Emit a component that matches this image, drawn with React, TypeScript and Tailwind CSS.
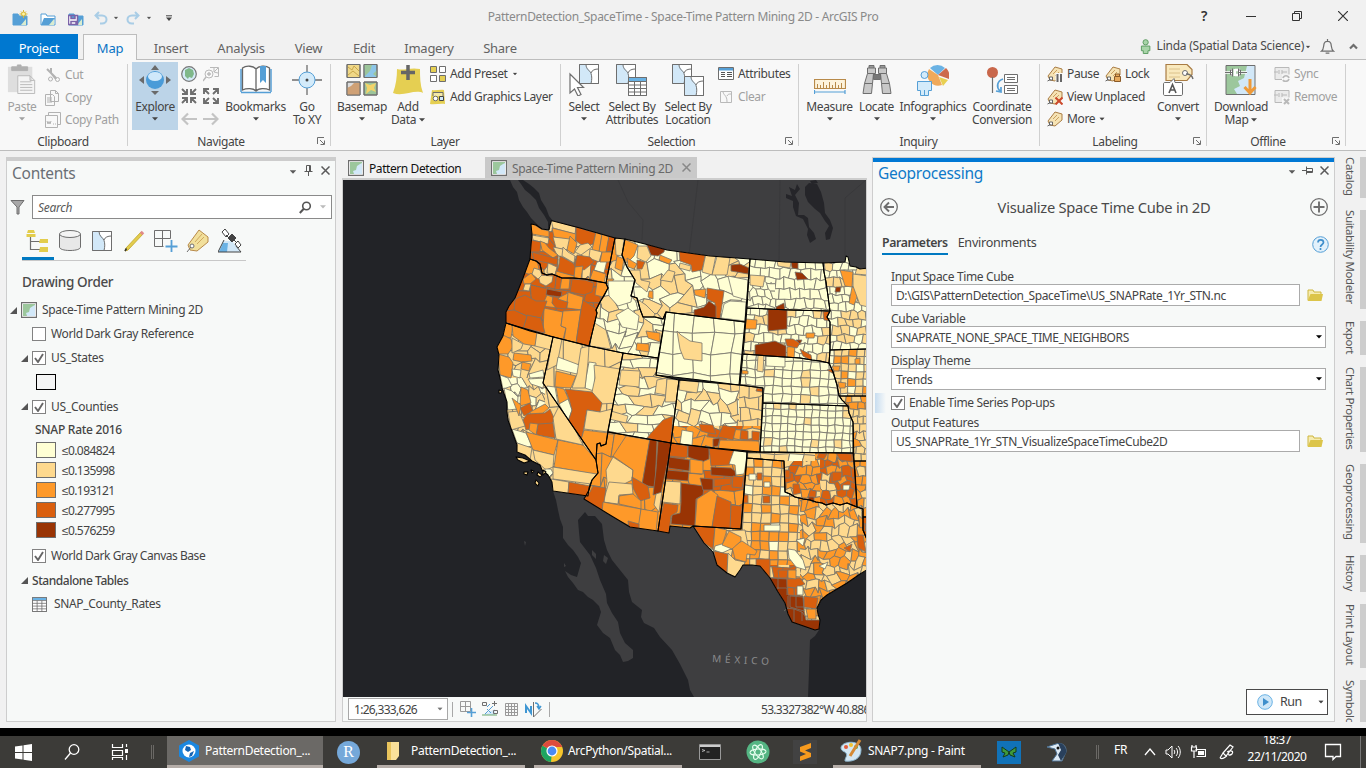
import React from "react";

type Kids = { children?: React.ReactNode };

/* ---------- generic helpers ---------- */

function Ico({ s = 32, v = 32, children, cls = "" }: Kids & { s?: number; v?: number; cls?: string }) {
  return (
    <svg width={s} height={s} viewBox={`0 0 ${v} ${v}`} className={`shrink-0 ${cls}`} fill="none" stroke="#6e6e6e" strokeWidth="1">
      {children}
    </svg>
  );
}

function Caret({ cls = "" }: { cls?: string }) {
  return (
    <svg width="6" height="4" viewBox="0 0 6 4" className={`shrink-0 ${cls}`}>
      <path d="M0 .3h6L3 3.6z" fill="currentColor" />
    </svg>
  );
}

function Big({ w, icon, a, b, caret, inline, cls = "" }: { w: string; icon: React.ReactNode; a: string; b?: string; caret?: boolean; inline?: boolean; cls?: string }) {
  return (
    <div className={`flex shrink-0 flex-col items-center pt-[3px] leading-[13px] whitespace-nowrap ${w} ${cls}`}>
      <div className="flex h-[37px] items-start pt-px">{icon}</div>
      <div>{a}</div>
      {b && (
        <div className="flex items-center gap-[3px]">
          {b}
          {inline && <Caret cls="mt-px" />}
        </div>
      )}
      {caret && <Caret cls="mt-[4px]" />}
    </div>
  );
}

function Row({ icon, children, cls = "" }: Kids & { icon: React.ReactNode; cls?: string }) {
  return (
    <div className={`flex h-[22.5px] items-center gap-1 whitespace-nowrap ${cls}`}>
      {icon}
      {children}
    </div>
  );
}

function Launcher() {
  return (
    <Ico s={8} v={8} cls="absolute right-[6px] bottom-[5px]">
      <path d="M.5 7V.5H7M3 3l4 4M7.5 3.500v4h-4" />
    </Ico>
  );
}

function Group({ w, label, launcher, children }: Kids & { w: string; label: string; launcher?: boolean }) {
  return (
    <div className={`relative flex shrink-0 flex-col ${w}`}>
      <div className="flex h-[72px]">{children}</div>
      <div className={`pt-[2px] text-center text-[12px] leading-4 text-[#444] ${launcher ? "pr-[17px]" : "pr-[2px]"}`}>{label}</div>
      {launcher && <Launcher />}
      <div className="absolute top-1 right-0 h-[82px] w-px bg-[#d0d0d0]" />
    </div>
  );
}

/* ---------- ribbon icons ---------- */

const FolderMap = ({ kind }: { kind: number }) => (
  <Ico s={16} v={16}>
    <path d="M1 15V4h5l1 2h8v9z" fill={kind === 1 ? "#fff" : "#559fd6"} stroke="#559fd6" />
    <path d="M1 15l3-7h11l-3 7z" fill="#559fd6" stroke="none" />
    <path d="M9 15l5-6v6z" fill="#d9eccf" stroke="none" />
    {kind === 0 && <path d="M11.500 0v8M7.500 4h8M9 1.500l5 5M14 1.500l-5 5" stroke="#d9b93c" />}
    {kind === 0 && <circle cx="11.500" cy="4" r="2" fill="#fff3a0" stroke="#d9b93c" />}
    {kind === 2 && <path d="M.5 5.500h9v9h-9zM3 5.500v3h4v-3M3 14.500v-3h5v3" fill="#fff" stroke="#7b62a8" strokeWidth="1.500" />}
  </Ico>
);

const Paste = (
  <Ico s={30}>
    <path d="M1 3h26v27H1z" fill="#dedede" stroke="none" />
    <path d="M5 3h17v4H5zM11 3V1h4v2" fill="#b0b0b0" stroke="#b0b0b0" />
    <path d="M11.500 12.500h13l5 5v14h-18zM24.500 12.500v5h5M14 19h12M14 22h13M14 25h13M14 28h13" fill="#f4f4f4" stroke="#b8b8b8" />
  </Ico>
);
const Cut = (
  <Ico s={16} v={16} cls="opacity-50">
    <path d="M2 2l9 9M6 1v5l5 6" strokeWidth="2" />
    <circle cx="12.500" cy="12.500" r="2" />
    <circle cx="5.500" cy="12" r="2" />
  </Ico>
);
const CopyI = (
  <Ico s={16} v={16} cls="opacity-50">
    <path d="M5.500.5h5l3 3v8h-8zM.5 4.500h7l2 2v9h-9zM2 8h5M2 10h5M2 12h5M10.500.5v3h3" fill="#f8f8f8" />
  </Ico>
);
const CopyPath = (
  <Ico s={16} v={16} cls="opacity-50">
    <path d="M3.500 3V.5h12v12H13M.5 3.500h12v12H.500z" fill="#f8f8f8" />
    <path d="M2 9l1 3 1-2.500L5 12l1-3M8 12h1M10 12h1" />
  </Ico>
);
const Explore = (
  <Ico>
    <path d="M16 1l4 5h-8zM16 31l4-4h-8zM0 16l5-4v8zM32 16l-5-4v8z" fill="#6a6a6a" stroke="none" />
    <circle cx="16" cy="16" r="9" fill="#4a9bd8" stroke="none" />
    <ellipse cx="16" cy="12.500" rx="7" ry="4.500" fill="#cfe8fa" stroke="none" />
  </Ico>
);
const Globe = (
  <Ico s={16} v={16}>
    <circle cx="8" cy="8" r="7.300" fill="#d5ebf8" stroke="#777" strokeWidth="1.200" />
    <path d="M4 4l4-2 4 2 1 4-2 4-3-1-1 2-3-3z" fill="#7fb88a" stroke="none" />
  </Ico>
);
const ZoomSel = (
  <Ico s={16} v={16} cls="opacity-45">
    <path d="M7 1.500h8.500v9h-4M15 2l-4 4V2M11 6l4 1" />
    <circle cx="6" cy="8" r="4" />
    <path d="M3 11l-3 4M4 8h4M6 6v4" strokeWidth="1.400" />
  </Ico>
);
const Arrows = ({ out }: { out?: boolean }) => (
  <Ico s={16} v={16}>
    {out ? (
      <path d="M1 6V1h5M1 1l5 5M10 1h5v5M15 1l-5 5M1 10v5h5M1 15l5-5M15 10v5h-5M15 15l-5-5" strokeWidth="1.900" />
    ) : (
      <path d="M6 1v5H1M1 1l5 5M10 1v5h5M15 1l-5 5M6 15v-5H1M1 15l5-5M10 15v-5h5M15 15l-5-5" strokeWidth="1.900" />
    )}
  </Ico>
);
const Arrow = ({ right }: { right?: boolean }) => (
  <Ico s={16} v={16}>
    <path d={right ? "M0 8h14M9 2.500L14.500 8 9 13.500" : "M16 8H2M7 2.500L1.500 8 7 13.500"} stroke="#c4c4c4" strokeWidth="2.200" />
  </Ico>
);
const Book = (
  <Ico>
    <path d="M1 28V5M31 28V5" stroke="#559fd6" strokeWidth="1.500" />
    <path d="M1 28.500h30" stroke="#559fd6" strokeWidth="1.500" />
    <path d="M2.500 26V4c4-3 11-2 13.500 1 2.500-3 9.500-4 13.500-1v22c-4-2-11-2-13.500 1-2.500-3-9.500-3-13.500-1zM16 5v22" fill="#fff" stroke="#666" strokeWidth="1.300" />
    <path d="M20 2h6v17l-3-3-3 3z" fill="#559fd6" stroke="none" />
  </Ico>
);
const GoTo = (
  <Ico>
    <path d="M16 1v8M16 24v7M1 16h7M24 16h7" strokeWidth="1.300" />
    <circle cx="16" cy="16" r="8" fill="#d4ebfa" stroke="#559fd6" />
    <circle cx="16" cy="16" r="1.500" fill="#444" stroke="none" />
  </Ico>
);
const Basemap = (
  <Ico>
    <path d="M1 .5h13v13H1z" fill="#f0d888" />
    <path d="M2 3l4 3 2-4 5 5M2 11l5-4 6 5" stroke="#c9a84c" />
    <path d="M18 .5h13v13H18z" fill="#8dc6e8" />
    <path d="M18 1h8l-2 6-5 5zM31 6l-4 4 4 3z" fill="#9cc59a" stroke="none" />
    <path d="M1 18h13v13H1z" fill="#dcdcdc" />
    <path d="M1 24l4-2 3-3h6v12H1z" fill="#cfa176" stroke="none" />
    <path d="M18 18h13v13H18z" fill="#9cc59a" />
    <path d="M19 19l5 2 6-2-2 5 2 4-5-2-5 4 1-6z" fill="#f2d36a" stroke="none" />
    <path d="M1 .5h13v13H1zM18 .5h13v13H18zM1 18h13v13H1zM18 18h13v13H18z" />
  </Ico>
);
const AddData = (
  <Ico>
    <path d="M5 5c7 2 13-2 23 0 0 8 0 16 3 24-8-4-20 4-30 0C4 21 5 13 5 5z" fill="#e5cf52" stroke="none" />
    <path d="M16 1v15M9 8.500h14" stroke="#666" strokeWidth="3.500" />
  </Ico>
);
const Preset = (
  <Ico s={16} v={16}>
    <path d="M.5.5h6v6h-6zM9.500 9.500h6v6h-6z" fill="#e5cf52" />
    <path d="M9.500.5h6v6h-6zM.500 9.500h6v6h-6z" fill="#fff" />
  </Ico>
);
const Graphics = (
  <Ico s={16} v={16}>
    <path d="M2 1c4 1 8-1 12 0l1 14c-5-1-10 1-15 0z" fill="#e5cf52" stroke="none" />
    <path d="M3 7V3.500h10V7" fill="#f4e9a8" />
    <circle cx="5.500" cy="9.500" r="2.300" fill="#fff" />
    <path d="M9.500 7.500h4v4h-4z" fill="#cfe8fa" stroke="#444" />
  </Ico>
);
const mapTile = (x: number, y: number) => (
  <g transform={`translate(${x} ${y})`}>
    <path d="M.5.5h19v19H.500z" fill="#fff" />
    <path d="M.5.5h6c2 5 6 6 6 10v9H.500z" fill="#d2e8f8" stroke="none" />
    <path d="M.5.5h19v19H.500zM7 .5c0 5 4 6 5 9s1 6 0 10M12 9c1-3 4-4 7.500-4" />
  </g>
);
const SelectI = (
  <Ico>
    {mapTile(11, 0)}
    <path d="M2 10v19l4.500-4 3.500 7 3-1.500-3.500-7h6z" fill="#fff" strokeWidth="1.200" />
  </Ico>
);
const tableIcon = (x: number, y: number) => (
  <g transform={`translate(${x} ${y})`}>
    <path d="M.5.5h18v18H.500z" fill="#fff" />
    <path d="M1 1h17v3H1z" fill="#6ab2e4" stroke="none" />
    <path d="M.5.5h18v18H.500zM.500 4.500h18M.500 8h18M.500 11.500h18M.500 15h18M6.500 4.500v14M12.500 4.500v14" />
  </g>
);
const SelAttr = (
  <Ico>
    {mapTile(0, 0)}
    {tableIcon(12, 13)}
  </Ico>
);
const SelLoc = (
  <Ico>
    {mapTile(0, 0)}
    {mapTile(12, 12)}
  </Ico>
);
const Attributes = (
  <Ico s={16} v={16}>
    <path d="M.5 1.500h15v12H.500z" fill="#fff" />
    <path d="M1 2h14v2.500H1z" fill="#559fd6" stroke="none" />
    <path d="M3 6.500h4M3 8.500h4M3 10.500h4M9 6.500h5M9 8.500h5M9 10.500h5" stroke="#555" />
  </Ico>
);
const ClearI = (
  <Ico s={16} v={16} cls="opacity-45">
    <path d="M2.500 2.500h11v11h-11zM5 3c1 4 4 3 4 10M9 7c1-2 2-2 4-2" />
  </Ico>
);
const Measure = (
  <Ico>
    <path d="M.5 15.500h31v9H.500z" fill="#fdf3dc" stroke="#b88a4a" strokeWidth="1.200" />
    <path d="M3.500 24v-4M6.500 24v-3M9.500 24v-6M12.500 24v-3M15.500 24v-6M18.500 24v-3M21.500 24v-6M24.500 24v-3M27.500 24v-5" stroke="#b88a4a" />
    <path d="M.5 26v4M31 26v4M1 28h30" stroke="#559fd6" strokeWidth="1.200" />
  </Ico>
);
const Locate = (
  <Ico>
    <path d="M8 4V1.500h5V4M19 4V1.500h5V4" fill="#999" />
    <path d="M6.500 4h8v5.500h-8zM17.500 4h8v5.500h-8z" fill="#c8c8c8" />
    <path d="M6.500 9.500h6l-1 10h-8zM19.500 9.500h6l3 10h-8z" fill="#c8c8c8" />
    <path d="M3.500 19.500h8l-1 10H2zM20.500 19.500h8l1.500 10h-8.500z" fill="#c8c8c8" />
    <path d="M12.500 10.500h7v5h-7z" fill="#777" />
  </Ico>
);
const Info = (
  <Ico>
    <path d="M21 11L13 4a11 11 0 0 1 15 0z" fill="#6ab2e4" stroke="none" />
    <path d="M21 11l-9-6a11 11 0 0 0 13 16z" fill="#f0a95a" stroke="none" />
    <path d="M21 11l8-7a11 11 0 0 1 3 11z" fill="#cc6a4c" stroke="none" />
    <path d="M22 13l9 3-5 6z" fill="#e8d052" stroke="none" />
    <circle cx="7.500" cy="11" r="3.500" fill="#d4ebfa" stroke="#559fd6" />
    <path d="M.5 17.500h14v9h-3v5h-8v-5h-3zM7.500 26v5" fill="#d4ebfa" stroke="#559fd6" />
  </Ico>
);
const Coord = (
  <Ico>
    <circle cx="6.500" cy="8.500" r="5.500" fill="#c9674b" stroke="none" />
    <path d="M6.500 13v16" strokeWidth="1.200" />
    <path d="M17 15c-6 2-7 8-3 12M10 27l5 1v-5" stroke="#559fd6" strokeWidth="1.700" />
    <path d="M18.500 10.500h13v8h-13zM18.500 21.500h13v8h-13zM21 13.500h8M21 15.500h8M21 24.500h8M21 26.500h8" fill="#fff" />
  </Ico>
);
const tag = "M1 10L8 1l7 2v6l-7 6-5-1z";
const Tag = ({ k }: { k?: string }) => (
  <Ico s={16} v={16}>
    <path d={tag} fill="#f6e3b4" stroke="#a97c44" />
    <path d="M6 8l4-4M8 10l4-4" stroke="#c9a060" />
    <path d="M.500 15l3-1.500M2.500 11h3v3h-3z" fill="#fff" stroke="#666" />
    {k === "pause" && <path d="M8.500 7h7.500v9H8.500z" fill="#f8f8f8" stroke="none" />}
    {k === "pause" && <path d="M10.500 8v8M14 8v8" stroke="#666" strokeWidth="2" />}
    {k === "x" && <path d="M8.500 8.500l7 7M15.500 8.500l-7 7" stroke="#cc4a2c" strokeWidth="2" />}
    {k === "lock" && <path d="M9.500 10.500h6v5h-6zM10.500 10V8h4v2" fill="#e6a95c" stroke="#8a5a28" />}
  </Ico>
);
const Convert = (
  <Ico>
    <path d="M4 .5h21l5 5v5l-5 6H4z" fill="#f9e9bd" stroke="#a97c44" strokeWidth="1.200" />
    <path d="M7 5h11M7 9h11M7 13h11" stroke="#dcc28a" />
    <circle cx="23" cy="9" r="2.500" fill="#fff" />
    <path d="M24 10c3 0 6 1 7 5" strokeWidth="1.400" />
    <path d="M3 18.500h5l4-4 1 4h6c1 0 1.500.5 1.500 1.500v10c0 1-.5 1.500-1.500 1.500H3c-1 0-1.500-.5-1.500-1.500V20c0-1 .5-1.500 1.500-1.500z" fill="#fff" />
    <path d="M7 29l3.500-8.500L14 29M8.500 26h4" strokeWidth="1.600" stroke="#555" />
  </Ico>
);
const Download = (
  <Ico>
    <path d="M1 1.500h29v29H1z" fill="#9cc79c" stroke="none" />
    <path d="M22 2h8v28H12l-3-5 6-3-2-5 6-3z" fill="#d2e8f8" stroke="none" />
    <path d="M1 1.500h29v29H1z" />
    <path d="M0 8.500h6M16 8.500h6M7 5v7M10 5v7M10 6h4v5h-4" stroke="#fff" strokeWidth="2.500" />
    <path d="M0 8.500h7M14 8.500h8M7.500 4.500v8M13.500 4.500v8M7.500 6h-2v5h2M13.500 6h2v5h-2" />
    <path d="M25 15v13M19.500 23l5.500 6 5.500-6" stroke="#ee9a3a" strokeWidth="3" />
  </Ico>
);
const Sync = ({ x }: { x?: boolean }) => (
  <Ico s={16} v={16} cls="opacity-45">
    <path d="M1 1.500h14v12H1z" fill="#ddd" />
    <path d="M0 6h4M5 4v4M8 4v4M8 6h5" />
    <path d="M8 8.500h8V16H8z" fill="#f8f8f8" stroke="none" />
    {x ? <path d="M10 10l5 5M15 10l-5 5" strokeWidth="2" /> : <path d="M9 12c1-3 5-3 6 0M15 13c-1 3-5 3-6 1" strokeWidth="1.700" />}
  </Ico>
);

/* ---------- map ---------- */

const PAL = ["#ffffd4", "#fed98e", "#fe9929", "#d95f0e", "#993404"];

const S: Record<string, string> = {
  WA: "531,224 536,225 542,229 549,230 551,221 553,221 580,228 615,238 606,283 595,281 585,279 573,278 562,278 552,274 547,275 542,273 540,264 536,261 530,259 531,245 532,235",
  OR: "530,259 536,261 540,264 542,273 547,275 552,274 562,278 573,278 585,279 595,281 606,283 608,288 604,296 600,302 596,310 597,313 589,346 550,336 506,323 506,312 509,306 515,298 519,288 523,278",
  CA: "506,323 530,331 553,337 543,383 596,460 598,473 592,480 589,488 588,496 553,491 552,482 548,475 542,470 540,465 532,461 525,455 517,452 517,445 513,434 508,420 507,412 507,402 502,388 500,378 498,370 499,355 497,347 503,336",
  NV: "553,337 589,346 623,353 608,430 606,444 601,446 600,443 597,444 596,460 543,383",
  ID: "615,238 625,239 622,255 627,267 635,280 631,296 637,298 640,309 643,317 655,317 663,319 666,312 658,358 623,353 589,346 597,313 596,310 600,302 608,288 606,283",
  MT: "625,239 645,244 667,250 710,256 750,259 745,322 705,317 666,312 663,319 655,317 643,317 640,309 637,298 631,296 635,280 627,267 622,255",
  WY: "666,312 705,317 745,322 739,385 700,380 656,375",
  UT: "623,353 658,358 656,375 679,380 671,443 608,432",
  CO: "679,380 739,385 763,388 760,452 715,448 671,443",
  AZ: "608,432 671,443 658,531 630,527 610,515 584,499 589,490 592,480 598,473 596,460 597,444 600,443 601,446 606,444",
  NM: "671,443 710,448 747,452 741,529 693,526 690,528 670,526 669,533 658,531",
  ND: "750,259 785,262 823,263 824,272 826,282 828,296 830,311 790,310 747,308",
  SD: "747,308 790,310 830,311 827,317 830,322 830,350 829,363 820,361 812,360 800,358 770,356 743,354",
  NE: "743,354 770,356 800,358 812,360 820,361 829,363 833,372 837,385 839,395 842,400 848,406 763,403 763,388 740,385",
  KS: "763,403 848,406 849,413 853,422 853,453 760,452",
  OK: "747,452 853,453 855,470 857,507 847,503 840,505 833,503 826,505 822,503 816,502 810,500 803,499 795,497 790,494 785,492 784,461 747,458",
  TX: "747,458 784,461 785,492 790,494 795,497 803,499 810,500 816,502 822,503 826,505 833,503 840,505 847,503 857,507 863,509 863,530 868,542 868,569 860,574 847,583 827,595 821,600 817,608 818,614 820,620 819,629 815,630 792,622 788,614 785,603 778,592 770,578 760,566 752,565 743,565 740,570 735,577 727,573 717,565 713,552 704,543 693,526 741,529",
  MN: "823,263 845,262 846,256 848,257 850,266 856,267 860,269 868,268 868,349 830,350 830,322 827,317 830,311 828,296 826,282 824,272",
  IA: "830,350 868,349 868,396 839,396 837,385 833,372 829,363",
  MO: "839,396 868,396 868,461 854,461 853,422 849,413 848,406 842,400",
  AR: "854,461 868,461 868,517 863,517 863,509 857,507",
  LA: "863,517 868,517 868,542 863,530",
};

/* region, x0, y0, x1, y1, cell width, cell height, jitter, palette mix, seed */
type G = [string, number, number, number, number, number, number, number, string, number];
const GRIDS: G[] = [
  ["WA", 528, 218, 618, 288, 13, 12, 0.35, "32313", 4],
  ["OR", 500, 255, 612, 350, 17, 16, 0.3, "3", 5],
  ["CA", 494, 320, 600, 500, 15, 14, 0.35, "1", 3],
  ["NV", 540, 335, 625, 462, 22, 28, 0.2, "1", 2],
  ["ID", 586, 236, 668, 362, 12, 12, 0.4, "0010100101", 8],
  ["MT", 620, 236, 752, 324, 15, 13, 0.42, "0001000010", 11],
  ["WY", 654, 310, 748, 388, 20, 21, 0.1, "0", 7],
  ["UT", 606, 350, 682, 446, 17, 9, 0.3, "001001", 14],
  ["CO", 669, 378, 766, 456, 12, 11, 0.38, "00101100", 21],
  ["AZ", 582, 430, 674, 534, 28, 26, 0.25, "2", 15],
  ["NM", 656, 441, 749, 536, 17, 15, 0.25, "2332", 17],
  ["ND", 745, 257, 832, 313, 10, 10, 0.16, "0000000100", 6],
  ["SD", 741, 306, 832, 365, 9, 9, 0.15, "000100010", 9],
  ["NE", 738, 352, 850, 408, 9.2, 8.2, 0.11, "00010000", 10],
  ["KS", 758, 401, 855, 455, 7.8, 7.4, 0.1, "0000000001", 12],
  ["OK", 745, 450, 859, 509, 8.6, 7.6, 0.28, "1212132", 13],
  ["TX", 690, 456, 870, 632, 9.2, 9.2, 0.08, "121210112", 16],
  ["MN", 820, 254, 870, 352, 8.5, 8, 0.2, "00100001", 18],
  ["IA", 827, 348, 870, 398, 7.5, 7.5, 0.08, "1001121", 19],
  ["MO", 838, 394, 870, 463, 7.5, 7.5, 0.2, "11212", 20],
  ["AR", 853, 459, 870, 519, 8, 8, 0.25, "21221", 22],
  ["LA", 862, 515, 870, 544, 8, 8, 0.2, "3", 23],
];
/* finer meshes laid over part of a state */
const FINE: G[] = [
  ["ND", 745, 282, 775, 309, 8, 8, 0.35, "0", 31],
  ["CA", 507, 378, 545, 410, 9, 8, 0.4, "1001", 32],
  ["CO", 671, 426, 763, 456, 13, 10, 0.35, "21233212", 33],
  ["CO", 739, 384, 766, 426, 12, 12, 0.2, "1011", 37],
  ["TX", 800, 500, 870, 610, 8.600, 8.200, 0.42, "2122112", 34],
  ["TX", 740, 565, 800, 610, 11, 11, 0.15, "2133", 35],
  ["OK", 745, 450, 785, 460, 12, 10, 0.1, "1", 36],
  ["OK", 820, 452, 859, 509, 7.500, 7.500, 0.35, "32232123", 38],
  ["OK", 747, 453, 815, 461, 14, 9, 0.1, "101", 39],
];

const rnd = (i: number, j: number, s: number) => {
  const v = Math.sin(i * 127.1 + j * 311.7 + s * 74.7) * 43758.5453;
  return v - Math.floor(v);
};

function Mesh({ g }: { g: G }) {
  const [st, x0, y0, x1, y1, cw, ch, jit, mix, seed] = g;
  const nx = Math.ceil((x1 - x0) / cw);
  const ny = Math.ceil((y1 - y0) / ch);
  const brick = jit > 0.12;
  const pt = (i: number, j: number) => {
    const x = x0 + i * cw - (brick ? 0 : j * ch * 0.04) + (rnd(i * 2, j, seed) - 0.5) * 2 * jit * cw;
    const y = y0 + j * ch + i * cw * 0.03 + (rnd(i * 2, j, seed + 5) - 0.5) * 2 * jit * ch;
    return `${x.toFixed(1)},${y.toFixed(1)}`;
  };
  const out: React.ReactNode[] = [];
  for (let j = -1; j < ny; j++) {
    const o = brick && j % 2 ? 0.5 : 0;
    for (let i = -1; i <= nx; i++) {
      const a = i + o;
      const pts = brick
        ? [pt(a, j), pt(a + 0.5, j), pt(a + 1, j), pt(a + 1, j + 1), pt(a + 0.5, j + 1), pt(a, j + 1)]
        : [pt(a, j), pt(a + 1, j), pt(a + 1, j + 1), pt(a, j + 1)];
      const c = Number(mix[Math.floor(rnd(i, j, seed + 9) * mix.length)]);
      out.push(<polygon key={`${i}_${j}`} points={pts.join(" ")} fill={PAL[c]} />);
    }
  }
  return <g clipPath={`url(#c${st})`}>{out}</g>;
}

/* counties drawn one by one: state -> list of "class points" */
const COUNTIES: Record<string, string[]> = {
  WA: [
    "2 530,222 541,229 549,231 549,237 532,234", "1 532,235 549,238 548,244 533,240", "3 531,240 541,242 540,252 530,252",
    "1 551,220 576,227 575,234 553,228", "2 552,228 576,234 575,241 554,237", "1 553,237 570,239 577,247 573,251 556,248",
    "1 553,247 572,251 568,260 557,255", "3 576,227 596,233 593,244 585,247 576,241", "2 596,232 602,235 599,252 592,250",
    "2 602,234 609,237 606,254 599,252", "3 609,236 616,238 612,251 606,252", "2 570,236 577,243 574,254 567,250",
    "1 575,252 580,245 588,243 592,247 581,255", "1 563,247 568,252 575,256 574,263 562,256", "1 590,249 602,252 599,262 589,258",
    "0 597,262 607,260 604,273 594,270", "2 602,252 613,252 610,262 600,262", "2 540,241 545,243 549,248 558,255 553,258 542,250",
    "3 532,252 558,259 557,265 534,260", "3 560,256 573,263 576,268 574,276 557,272 559,264", "3 577,255 590,257 594,262 584,270 575,266",
    "1 548,263 557,267 555,275 547,273", "2 575,267 583,266 581,279 574,278", "2 556,271 574,276 574,280 556,279",
    "2 593,270 606,274 604,283 590,279",
  ],
  OR: [
    "2 529,258 537,260 539,269 532,275 525,273", "2 523,279 531,273 536,279 530,284 524,284", "1 538,275 553,276 552,282 546,286 540,283",
    "1 534,268 540,270 542,275 538,279 532,274", "1 525,284 531,284 529,291 523,290", "2 562,277 570,279 569,289 560,289",
    "4 547,289 562,292 561,297 546,295", "2 547,295 555,298 552,303 558,308 542,306", "2 567,292 583,297 582,310 567,308",
    "2 544,308 563,312 561,326 566,328 563,340 543,334", "2 563,311 581,310 576,343 564,340 566,328 561,326",
    "3 583,300 594,307 598,310 597,320 589,347 576,343 581,309", "2 597,282 607,282 609,289 603,297 595,295",
    "3 515,299 525,295 536,301 547,301 541,318 527,316 514,311", "3 527,315 541,318 545,333 523,328", "3 505,311 514,310 527,316 523,329 505,322",
    "3 553,296 568,302 566,309 556,308 552,303", "2 560,297 568,293 567,302 558,299", "3 572,279 585,280 594,283 592,292 584,295 570,292",
  ],
  CA: [
    "2 504,322 513,325 511,338 503,337", "2 512,325 538,332 535,346 524,344 513,336", "2 503,335 511,339 513,347 508,354 497,354 496,346",
    "1 512,338 523,344 521,349 512,353", "1 537,332 554,336 551,350 535,346", "2 498,354 509,357 513,363 511,378 500,375",
    "2 514,353 531,355 532,361 522,362 513,360", "2 522,362 531,364 529,371 521,369", "0 512,369 521,370 520,378 513,376",
    "0 500,375 508,378 512,386 503,389", "0 504,388 512,391 518,397 517,409 508,410", "0 529,374 543,370 544,377 530,378",
    "0 528,379 545,378 543,388 531,384", "2 521,387 528,390 531,403 520,406", "3 520,408 530,403 533,411 524,416",
    "2 530,412 545,404 549,408 542,414 530,416", "3 523,420 527,414 545,413 550,409 554,418 552,425 545,424 537,428 526,430",
    "3 538,424 553,423 555,438 536,435", "2 530,423 538,424 536,435 529,430", "0 512,429 526,433 532,446 527,447 517,443",
    "2 526,432 558,440 554,455 533,450", "2 558,440 583,445 597,461 599,475 554,467", "1 553,418 561,402 583,445 556,439",
    "1 517,443 532,448 530,460 516,453", "1 533,450 554,455 553,467 546,470 535,460", "1 553,467 597,474 591,484 553,479",
    "0 545,469 551,469 553,473 549,477 545,474", "1 551,479 569,482 568,494 551,492", "3 569,482 590,486 589,497 568,494",
    "1 508,412 519,411 525,426 511,430", "2 512,398 521,405 519,416",
  ],
  NV: [
    "1 553,336 562,339 557,365 547,370", "0 558,357 582,366 577,374 556,369", "2 556,371 576,376 571,388 555,387",
    "0 589,362 596,363 594,391 585,388 586,378", "1 581,348 589,346 588,362 585,388 572,388 577,374", "2 556,387 564,389 569,400 559,404",
    "0 547,386 555,387 558,404 546,392", "0 559,404 568,399 572,410 568,421", "1 594,365 620,369 617,403 600,404 592,392 595,378",
    "3 565,389 592,392 602,403 600,412 587,410 581,444 568,422 572,410 569,399", "1 587,410 600,412 612,409 608,432 584,429",
    "2 584,430 609,433 607,446 597,444 597,462 580,443",
  ],
  ID: ["2 615,238 621,239 617,260 610,262", "1 615,238 624,239 622,256 616,255", "2 617,256 624,259 622,271 615,268", "2 606,279 614,279 611,284 606,283", "0 608,281 634,281 631,302 618,306 609,296", "2 646,331 660,333 660,342 648,338", "2 637,343 649,344 649,352 636,350", "1 593,322 606,330 611,349 590,346", "0 616,315 628,308 639,316 637,330 622,327"],
  MT: [
    "2 624,239 638,245 634,256 627,263 622,255", "4 646,243 665,247 664,252 658,256 651,255", "3 637,260 645,262 642,269 637,269",
    "2 660,255 672,260 669,264 659,260", "3 679,250 691,252 706,253 702,270 692,272 691,265 680,261", "1 706,253 716,255 712,275 702,272",
    "1 717,256 730,258 727,275 712,275", "4 731,265 740,264 749,268 748,274 731,271", "2 694,290 706,289 705,298 695,295",
    "3 707,288 724,291 720,319 714,318 715,303 707,299", "4 694,310 704,307 709,301 716,306 716,318 694,316", "2 649,291 653,291 653,299 648,297",
    "1 637,299 646,305 655,314 653,318 642,317", "1 629,270 640,270 641,280 650,282 647,292 636,283", "2 627,258 637,264 634,269 628,267",
    "0 728,276 748,280 747,300 733,296", "0 730,301 746,302 745,321 721,318 724,304", "1 680,263 691,266 690,271 679,268",
    "1 668,270 675,272 672,282 660,280", "1 638,246 647,246 651,256 646,262 637,258",
  ],
  WY: ["1 677,331 681,335 690,341 702,343 702,361 684,359 680,349"],
  UT: ["3 663,420 673,416 671,444 647,438 651,433", "1 621,370 640,371 639,387 619,385", "1 657,380 667,378 666,395 655,393", "1 667,379 680,380 676,402 665,402", "1 611,411 628,416 626,423 609,419"],
  CO: ["3 699,424 713,425 716,434 708,433 701,431", "3 723,425 736,428 733,440 718,437", "4 713,439 720,438 718,446 713,447", "1 680,380 699,382 697,393 679,390", "3 757,388 763,389 762,392 756,391", "3 741,430 748,431 748,440 740,439", "2 720,440 759,441 760,452 718,449", "3 752,431 760,432 759,441 752,440", "0 682,430 693,432 692,446 680,444"],
  AZ: [
    "1 613,457 633,470 632,480 624,484 618,503 603,502 607,482 606,470", "2 626,436 650,440 642,485 632,481 633,470 613,456",
    "4 650,438 657,441 655,487 642,485", "4 658,441 672,443 661,493 653,495 656,470", "3 632,477 648,486 650,498 640,501 633,488",
    "1 609,482 632,484 633,494 619,495 618,504 603,502", "3 593,486 606,488 603,510 583,500 590,492",
    "2 619,496 633,494 641,501 641,509 619,504", "2 603,502 641,509 639,530 602,513", "2 641,509 658,512 656,532 638,529", "1 656,494 662,492 659,512 654,505",
    "3 628,521 639,524 639,529 629,528",
  ],
  NM: [
    "3 671,443 688,446 687,458 669,456", "4 688,445 709,448 709,459 702,462 688,457", "4 669,457 690,460 689,471 668,468",
    "4 667,470 689,472 688,481 666,479", "2 690,459 703,461 703,474 690,473", "1 664,481 681,482 680,504 662,502",
    "4 681,483 704,486 703,495 696,499 695,526 671,524 672,515 680,513 681,502", "3 664,503 678,505 677,512 671,516 669,534 656,532",
    "4 711,467 731,468 735,471 736,477 711,475", "4 700,478 713,479 713,490 703,490", "3 709,448 734,450 730,465 711,466",
    "0 734,450 748,452 744,474 736,475 735,465 729,464", "2 697,499 711,490 718,495 715,510 712,528 695,526", "3 717,496 731,502 731,529 712,527",
    "3 731,505 742,506 741,530 730,529", "3 714,479 731,478 731,484 714,487", "3 733,476 744,477 742,488 732,487",
  ],
  ND: ["4 791,262 798,262 798,269 792,268", "4 795,272 802,273 808,279 797,280", "1 777,261 791,262 790,268 778,266", "1 750,275 765,276 763,287 750,285", "4 776,307 784,303 785,312 776,310"],
  SD: [
    "4 768,309 787,310 787,329 768,331", "4 755,345 775,341 786,346 786,358 755,355", "2 787,347 795,346 794,359 787,358",
    "3 785,339 793,339 800,343 797,348 787,346", "4 796,340 802,340 800,344", "3 800,349 811,355 812,361 803,356", "2 746,319 757,320 756,329 745,329",
    "2 806,333 815,333 814,338 806,338", "3 823,312 830,311 827,316 830,321 824,320",
  ],
  NE: ["1 758,355 764,355 763,372 757,371", "2 742,370 748,371 748,374 742,374", "3 827,370 832,369 834,374", "0 766,356 785,357 785,367 766,366"],
  MN: ["2 840,270 853,272 852,287 845,286", "2 852,287 860,289 854,305 849,303", "4 836,287 841,287 840,292 835,292", "1 853,274 868,276 868,307 860,305 853,286", "1 857,268 868,269 868,275 855,274"],
  IA: ["2 832,366 840,366 839,371 834,371", "2 838,382 846,383 845,388 839,388", "2 855,359 860,358 860,364 855,364"],
  OK: ["3 785,470 790,470 790,478 785,478", "0 843,485 850,485 849,490 843,490", "3 793,484 799,484 801,493 793,495", "4 808,497 814,497 814,503 809,501", "3 832,472 842,472 841,480 832,482", "3 819,453 827,454 824,459 817,458", "3 836,453 852,454 852,462 840,460"],
  TX: [
    "3 693,525 715,527 713,549 704,543", "2 715,527 727,530 722,546 713,550", "1 726,531 745,530 748,545 730,545",
    "0 715,546 725,543 733,548 722,553 714,550", "3 714,551 728,554 727,574 716,566", "1 728,553 735,560 745,562 740,578 727,574",
    "2 732,547 742,541 757,551 755,555 747,554 746,562 735,559", "2 722,545 729,531 741,537 741,541 732,549", "3 756,559 770,559 770,580 756,565",
    "4 770,578 787,579 788,595 803,596 804,611 806,620 820,620 820,632 790,624 785,603 777,592", "3 787,579 800,578 805,584 796,588 787,587",
    "0 797,586 803,586 803,595 797,595", "3 804,596 818,598 816,609 804,607", "2 806,609 816,609 816,619 808,619", "3 778,570 788,570 787,578 779,578",
    "2 788,570 796,570 796,579 788,578", "3 757,473 762,473 762,480 757,480", "0 764,482 770,482 770,487 764,487", "3 763,496 770,496 770,503 763,503",
    "3 844,548 852,544 850,552", "0 819,566 828,562 825,569", "0 796,540 805,538 803,546", "3 857,535 863,535 866,552 858,548", "0 764,525 780,525 780,531 764,531",
    "0 788,549 795,550 803,560 806,570 796,567 789,558", "0 749,474 756,474 756,480 749,480", "3 742,495 748,495 748,503 742,503",
    "4 790,596 803,597 804,611 790,607",
  ],
};
/* internal lines in the southernmost counties */
const SOUTH = "M777 588h10v7M778 579v10M788 596v12l-4 3M796 597v10h8M786 608l8 1v13M794 609l8 3v9M802 612l6 8";

const LAND = [
  "510,180 513,187 517,192 519,200 523,207 527,212 531,218 537,224 541,229 548,230 548,222 544,215 539,208 536,200 530,194 525,190 521,184 518,180",
  "523,180 529,184 534,188 539,193 541,200 546,208 549,216 553,221 600,240 700,262 860,275 866,275 866,180",
  "553,491 556,500 558,510 560,519 563,527 563,538 568,545 573,550 578,557 581,563 579,570 577,577 571,575 565,571 568,577 573,583 578,590 583,592 588,597 593,600 599,606 601,612 597,625 603,633 610,638 615,650 620,655 623,662 628,661 633,658 633,650 625,643 620,633 618,622 612,613 607,603 606,594 600,580 596,568 590,555 580,542 579,532 578,520 585,512 588,516 595,516 602,524 604,540 607,550 612,560 620,570 628,580 629,592 632,602 642,610 641,617 644,623 654,628 660,637 672,650 680,664 688,680 690,690 694,697 808,697 809,670 810,640 815,636 819,630 790,560 700,500",
];
const LAKES = [
  "805,187 809,183 817,184 821,192 824,203 825,213 830,220 833,228 830,239 826,240 825,233 829,226 825,221 820,213 815,209 808,202 805,195",
  "789,187 795,190 797,184 800,189 795,195 799,203 798,215 804,215 808,218 809,227 814,233 816,239 810,243 807,235 808,229 803,219 796,216 793,207 793,201 786,198 786,194 792,196",
  "810,181 816,180 818,183 812,184",
];
const ISLES = ["516,457 523,458 530,461 524,463 518,460", "524,472 528,472 527,475 524,474", "531,470 534,471 532,473", "538,472 542,475 540,477 537,475", "536,480 539,483 538,486 535,483", "499,390 502,391 501,393 499,393", "543,470 546,472 543,475"];

function MapView() {
  return (
    <svg width="523" height="517" viewBox="343 180 523 517" className="block shrink-0 bg-[#222327]">
      <defs>
        {Object.entries(S).map(([k, p]) => (
          <clipPath key={k} id={`c${k}`}>
            <polygon points={p} />
          </clipPath>
        ))}
      </defs>
      <g fill="#3e3e40">
        {LAND.map((p) => (
          <polygon key={p} points={p} />
        ))}
        <path d="M524 541l2 1-1 4zM604 555l4 3-2 6-3-3zM592 550l4 4v5l-4-4zM564 563l2 3-2 1z" />
      </g>
      <g stroke="#39393b" fill="none">
        <path d="M618 180l10 22 15 18-1 20M698 180l-9 75M780 180l-1 82M845 258v-60l21-18" />
      </g>
      <g fill="#252529">
        {LAKES.map((p) => (
          <polygon key={p} points={p} />
        ))}
      </g>
      <g stroke="#77756c" strokeWidth=".8" strokeLinejoin="round">
        {GRIDS.map((g) => (
          <Mesh key={g[9]} g={g} />
        ))}
        {FINE.map((g) => (
          <g key={g[9]}>
            <clipPath id={`f${g[9]}`}>
              <rect x={g[1]} y={g[2]} width={g[3] - g[1]} height={g[4] - g[2]} />
            </clipPath>
            <g clipPath={`url(#f${g[9]})`}>
              <Mesh g={g} />
            </g>
          </g>
        ))}
        {Object.entries(COUNTIES).map(([k, list]) => (
          <g key={k} clipPath={`url(#c${k})`}>
            {list.map((c) => (
              <polygon key={c} fill={PAL[Number(c[0])]} points={c.slice(2)} />
            ))}
          </g>
        ))}
        <path d={SOUTH} fill="none" />
      </g>
      <g stroke="#000" strokeWidth="1.050" strokeLinejoin="round" fill="none">
        {Object.entries(S).map(([k, p]) => (
          <polygon key={k} points={p} />
        ))}
        {ISLES.map((p) => (
          <polygon key={p} points={p} fill="#fed98e" />
        ))}
      </g>
      <text x="712" y="662" transform="rotate(3 712 662)" fontSize="10" letterSpacing="3.800" fill="#8b8b8d" fontFamily="Noto Sans, sans-serif">
        MÉXICO
      </text>
    </svg>
  );
}

/* ---------- panel pieces ---------- */

function Pins({ side, cls = "" }: { side?: boolean; cls?: string }) {
  return (
    <div className={`flex items-center text-[#5a5a5a] ${cls}`}>
      <Caret cls="mt-[3px] scale-110" />
      <Ico s={11} v={11} cls={side ? "ml-[7px] rotate-90" : "ml-[7px]"}>
        <path d="M3.500 6.500v-6h4v6M1.500 6.500h8M5.500 7v4M6.500 1v5" stroke="#5a5a5a" />
      </Ico>
      <Ico s={9} v={9} cls="ml-[7px]">
        <path d="M.5.5l8 8M8.500.5l-8 8" stroke="#5a5a5a" strokeWidth="1.500" />
      </Ico>
    </div>
  );
}

function Check({ on }: { on?: boolean }) {
  return (
    <div className="flex h-[14px] w-[14px] shrink-0 items-center justify-center border border-[#828282] bg-white">
      {on && (
        <Ico s={10} v={10}>
          <path d="M1 5l3 4 5-8" strokeWidth="1.900" stroke="#666" />
        </Ico>
      )}
    </div>
  );
}

const Tri = () => (
  <svg width="7" height="7" viewBox="0 0 7 7" className="shrink-0">
    <path d="M7 0v7H0z" fill="#555" />
  </svg>
);

const MapIcon = () => (
  <Ico s={16} v={16}>
    <path d="M.5.5h15v15H.500z" fill="#fff" strokeWidth="1.300" />
    <path d="M2 2h12v12H2z" fill="#9cc79c" stroke="none" />
    <path d="M14 3v11H6l-1-3 3-1 1-4 3-2z" fill="#d2e8f8" stroke="none" />
  </Ico>
);

const FolderY = () => (
  <Ico s={16} v={16}>
    <path d="M1 13V3h5l1 2h7v2" fill="#f6ecb0" stroke="#cdb63e" />
    <path d="M.5 14l3-7H16l-1.500 7z" fill="#dcc54a" stroke="none" />
  </Ico>
);

function Tree({ h, pl, children }: Kids & { h: string; pl: string }) {
  return <div className={`flex items-center whitespace-nowrap ${h} ${pl}`}>{children}</div>;
}

function Swatch({ c }: { c: string }) {
  return <div className={`h-4 w-5 shrink-0 border border-[#6e6e6e] ${c}`} />;
}

function Contents() {
  return (
    <div className="flex h-[565px] w-[330px] shrink-0 flex-col border border-t-4 border-[#cdcdcd] bg-[#f7f9f8] text-[12px] text-[#444]">
      <div className="flex h-6 items-center justify-between pr-[5px] pl-[5px]">
        <span className="text-[15.500px] leading-6 text-[#6a6f75]">Contents</span>
        <Pins cls="-mt-[6px]" />
      </div>
      <div className="mt-[10px] flex h-6 items-center pl-[3px]">
        <Ico s={16} v={16}>
          <path d="M1 1.500h13L9 8v7H7V8z" fill="#a8a8a8" />
        </Ico>
        <div className="ml-[6px] flex h-6 w-[300px] items-center border border-[#8a8a8a] bg-white pr-[5px] pl-[5px]">
          <i className="mt-px flex-1 text-[#5a5a5a]">Search</i>
          <Ico s={13} v={13}>
            <circle cx="7.500" cy="5" r="3.800" strokeWidth="1.600" stroke="#555" />
            <path d="M5 7.500L.8 12" strokeWidth="2" stroke="#555" />
          </Ico>
          <Caret cls="ml-[8px] text-[#bbb]" />
        </div>
      </div>
      <div className="mt-[7px] ml-[15px] flex h-[35px] w-[224px] border-b border-[#c8c8c8]">
        <div className="flex w-8 flex-col items-center border-b-[3px] border-[#0079c1] pt-[3px]">
          <Ico s={24} v={24}>
            <path d="M4.500 8v12.500H14M4.500 12.500H14" strokeWidth="1.200" />
            <path d="M2 1h6l1 3H1zM.5 5h9v3H.500zM14 10h8v4h-9zM14 18h8v5h-9z" fill="#e3cd4c" stroke="none" />
          </Ico>
        </div>
        <div className="flex flex-1 justify-around pt-[3px] pl-0">
          <Ico s={24} v={24}>
            <path d="M1.500 5v13c0 2 4 3.500 10.500 3.500S22.500 20 22.500 18V5" fill="#e8e8e8" />
            <ellipse cx="12" cy="5" rx="10.500" ry="3.500" fill="#f4f4f4" />
          </Ico>
          <Ico s={24} v={24}>
            <g transform="translate(2 2)">{mapTile(0, 0)}</g>
          </Ico>
          <Ico s={24} v={24}>
            <path d="M3 22l3-1L21 5l-2-2L4 19z" fill="#e3cd4c" stroke="#c9b13c" />
            <path d="M19 5l2-2" stroke="#e08a8a" strokeWidth="3.500" />
            <path d="M3 22l1.500-2.500" stroke="#333" strokeWidth="1.500" />
          </Ico>
          <Ico s={24} v={24}>
            <path d="M.5 1.500h16v8H.500zM.500 9.500v8h9M8.500 1.500v16" />
            <path d="M17.500 11v12M11.500 17.500h12" stroke="#559fd6" strokeWidth="1.800" />
          </Ico>
          <Ico s={24} v={24}>
            <path d="M2 16L13 1l9 7v5L11 22l-7-1z" fill="#f2e09c" stroke="#b88a4a" />
            <path d="M9 13l7-8M11 15l7-7" stroke="#cfa860" />
            <circle cx="6" cy="17" r="2" fill="#fff" />
            <path d="M1 23l4-5" />
          </Ico>
          <Ico s={24} v={24}>
            <path d="M5 12h9l9 11H0z" fill="#d2e8f8" stroke="none" />
            <path d="M5 14h5l-1 9H1z" fill="#6ab2e4" stroke="none" />
            <path d="M6 11L0 23h23l-5-6" stroke="#444" />
            <path d="M4 3l3-3 4 5-3 3zM17 15l3-3 3 4-3 3z" fill="#fff" stroke="#444" />
            <path d="M10 9l4-4 4 4-4 4zM8 6l3 3M16 11l3 3" fill="#444" stroke="#444" />
          </Ico>
        </div>
      </div>
      <div className="mt-[9px] pl-[15px] text-[13.500px] leading-6 font-medium tracking-[-0.350px] text-[#4a4a4a]">Drawing Order</div>
      <div className="mt-[4px] flex flex-col">
        <Tree h="h-6" pl="pl-[3px]">
          <Tri />
          <div className="mr-[5px] ml-[4px]"><MapIcon /></div>
          <span className="tracking-[-0.340px]">Space-Time Pattern Mining 2D</span>
        </Tree>
        <Tree h="h-6" pl="pl-[25px]">
          <Check />
          <span className="ml-[5px] tracking-[-0.400px]">World Dark Gray Reference</span>
        </Tree>
        <Tree h="h-6" pl="pl-[14px]">
          <Tri />
          <span className="ml-[4px]"><Check on /></span>
          <span className="ml-[5px]">US_States</span>
        </Tree>
        <Tree h="h-6" pl="pl-[29px]">
          <div className="h-4 w-5 border-[1.500px] border-black bg-[#f4f5f5]" />
        </Tree>
        <Tree h="h-[25px]" pl="pl-[14px]">
          <Tri />
          <span className="ml-[4px]"><Check on /></span>
          <span className="ml-[5px]">US_Counties</span>
        </Tree>
        <Tree h="h-[21px]" pl="pl-[28px]">
          <span className="font-medium">SNAP Rate 2016</span>
        </Tree>
        {[
          ["bg-[#ffffd4]", "≤0.084824"],
          ["bg-[#fed98e]", "≤0.135998"],
          ["bg-[#fe9929]", "≤0.193121"],
          ["bg-[#d95f0e]", "≤0.277995"],
          ["bg-[#993404]", "≤0.576259"],
        ].map(([c, t]) => (
          <Tree key={t} h="h-5" pl="pl-[29px]">
            <Swatch c={c} />
            <span className="mt-px ml-[6px] tracking-[-0.600px]">{t}</span>
          </Tree>
        ))}
        <Tree h="h-[32px]" pl="pl-[25px]">
          <Check on />
          <span className="ml-[5px] tracking-[-0.460px]">World Dark Gray Canvas Base</span>
        </Tree>
        <Tree h="h-[17px]" pl="pl-[14px]">
          <Tri />
          <span className="ml-[4px] font-medium tracking-[-0.450px]">Standalone Tables</span>
        </Tree>
        <Tree h="h-[30px]" pl="pl-[25px]">
          <Ico s={15} v={19}>{tableIcon(0, 0)}</Ico>
          <span className="ml-[7px] tracking-[-0.340px]">SNAP_County_Rates</span>
        </Tree>
      </div>
    </div>
  );
}

function MapPane() {
  return (
    <div className="ml-[6px] flex h-[565px] w-[525px] shrink-0 flex-col text-[12px]">
      <div className="flex h-[21px] items-center">
        <div className="flex h-full w-[143px] items-center pl-[6px] text-[#111]">
          <MapIcon />
          <span className="mt-[2px] ml-[5px] tracking-[-0.420px] whitespace-nowrap">Pattern Detection</span>
        </div>
        <div className="flex h-full w-[212px] items-center bg-[#c9c9c9] pl-[6px] text-[#6a6a6a]">
          <MapIcon />
          <span className="mt-[2px] ml-[5px] flex-1 tracking-[-0.340px] whitespace-nowrap">Space-Time Pattern Mining 2D</span>
          <Ico s={9} v={9} cls="mr-[6px]">
            <path d="M.5.5l8 8M8.500.5l-8 8" stroke="#888" strokeWidth="1.500" />
          </Ico>
        </div>
      </div>
      <div className="h-[544px] border border-t-2 border-[#cdcdcd] bg-[#f7f9f8]">
        <MapView />
        <div className="flex h-6 items-center pl-[5px] text-[#444]">
          <div className="flex h-[22px] w-[100px] items-center justify-between border border-[#a8a8a8] bg-white pr-[4px] pl-[5px]">
            <span className="mt-px tracking-[-0.700px]">1:26,333,626</span>
            <Caret cls="scale-90 text-[#777]" />
          </div>
          <div className="ml-1 h-[15px] w-px bg-[#a8a8a8]" />
          <Ico s={16} v={16} cls="ml-[7px]">
            <path d="M.5.5h10v10H.500zM.500 5.500h10M5.500.5v10" stroke="#999" />
            <path d="M11.500 7v9M7 11.500h9" stroke="#559fd6" strokeWidth="1.600" />
          </Ico>
          <Ico s={16} v={16} cls="ml-[6px]">
            <path d="M1 14L13 8v6z" fill="#d2e8f8" stroke="none" />
            <path d="M.5 1.500h4v3h-4zM11.500 9.500h4v3h-4zM12.500 0v5M10 2.500h5" />
            <path d="M3 13l8-8M5 8l4 4M8 3l-3 3" stroke="#559fd6" />
            <path d="M0 14h15" stroke="#6aa86a" />
          </Ico>
          <Ico s={13} v={13} cls="ml-[7px]">
            <path d="M.5.5h12v12H.500zM.500 3.500h12M.500 6.500h12M.500 9.500h12M3.500.5v12M6.500.5v12M9.500.5v12" stroke="#999" />
          </Ico>
          <Ico s={17} v={17} cls="ml-[7px]">
            <path d="M1 12V5l5 7V5" stroke="#3f97d3" strokeWidth="2" />
            <path d="M8.500 1v15M8.500 16l8-8" />
            <path d="M10 2c3 0 4 2 4 5M12 5l2 3 2-3" stroke="#3f97d3" strokeWidth="1.400" />
          </Ico>
          <div className="ml-[7px] h-[15px] w-px bg-[#a8a8a8]" />
          <div className="mt-px ml-auto w-[105px] overflow-hidden tracking-[-0.700px] whitespace-nowrap">53.3327382°W 40.886</div>
        </div>
      </div>
    </div>
  );
}

function Field({ label, value, kind, lh, fit = "" }: { label: string; value: string; kind: "file" | "pick"; lh: string; fit?: string }) {
  return (
    <>
      <div className={`flex items-center ${lh}`}>{label}</div>
      <div className="flex h-[22px] items-center">
        <div className={`flex h-[22px] items-center justify-between border border-[#ababab] bg-white pt-px pr-[3px] pl-[4px] ${kind === "file" ? "w-[409px]" : "w-[435px]"}`}>
          <span className={fit}>{value}</span>
          {kind === "pick" && <Caret cls="-mt-px text-black" />}
        </div>
        {kind === "file" && <div className="ml-[7px]"><FolderY /></div>}
      </div>
    </>
  );
}

function Geoprocessing() {
  return (
    <div className="ml-[5px] flex h-[565px] w-[463px] shrink-0 flex-col border border-[#cdcdcd] bg-[#f7f9f8] text-[12px] whitespace-nowrap text-[#444]">
      <div className="h-[4px] bg-[#0078d4]" />
      <div className="flex h-6 items-center justify-between pr-[5px] pl-[5px]">
        <span className="-mt-px text-[15.500px] text-[#0f79c8]">Geoprocessing</span>
        <Pins side cls="-mt-[7px]" />
      </div>
      <div className="mt-[10px] flex h-[22px] items-center justify-between pr-[6px] pl-[7px]">
        <Ico s={18} v={18}>
          <circle cx="9" cy="9" r="8.300" strokeWidth="1.300" />
          <path d="M14 9H5M9 4.500L4.500 9 9 13.500" strokeWidth="1.900" />
        </Ico>
        <span className="text-[14.700px] text-[#4a4a4a]">Visualize Space Time Cube in 2D</span>
        <Ico s={18} v={18}>
          <circle cx="9" cy="9" r="8.300" strokeWidth="1.300" />
          <path d="M9 3.500v11M3.500 9h11" strokeWidth="1.900" />
        </Ico>
      </div>
      <div className="mt-[13px] flex h-[24px] items-center pr-[5px] pl-[9px] text-[12.600px]">
        <span className="flex h-[23px] items-center border-b-2 border-[#0079c1] pt-[2px] text-[12.300px] font-semibold tracking-[-0.400px]">Parameters</span>
        <span className="mt-px ml-[10px] flex-1">Environments</span>
        <Ico s={17} v={17} cls="mt-[2px]">
          <circle cx="8.500" cy="8.500" r="7.800" fill="#e2f1fb" stroke="#559fd6" />
          <path d="M6 6.500c0-3.500 5.500-3.500 5.500 0 0 2-3 2-3 4.500M8.500 12v2" stroke="#3f8fcc" strokeWidth="1.700" />
        </Ico>
      </div>
      <div className="mt-[14px] flex flex-col pl-[18px]">
        <Field label="Input Space Time Cube" value="D:\GIS\PatternDetection_SpaceTime\US_SNAPRate_1Yr_STN.nc" kind="file" lh="h-[15px] tracking-[-0.350px]" fit="tracking-[-0.390px]" />
        <Field label="Cube Variable" value="SNAPRATE_NONE_SPACE_TIME_NEIGHBORS" kind="pick" lh="h-5 pt-[5px]" fit="tracking-[-0.380px]" />
        <Field label="Display Theme" value="Trends" kind="pick" lh="h-5 pt-[5px]" />
        <div className="-ml-4 flex h-[25px] items-center">
          <div className="h-5 w-[11px] bg-gradient-to-r from-[#c8ddf0] to-[#f7f9f8]" />
          <div className="ml-[5px]"><Check on /></div>
          <span className="ml-1 tracking-[-0.380px]">Enable Time Series Pop-ups</span>
        </div>
        <Field label="Output Features" value="US_SNAPRate_1Yr_STN_VisualizeSpaceTimeCube2D" kind="file" lh="h-[15px]" fit="tracking-[-0.370px]" />
      </div>
      <div className="mt-auto mr-[6px] mb-[6px] flex h-[26px] w-[82px] items-center self-end border border-[#4a4a4a] bg-white pr-[3px] pl-[10px] text-[12.500px]">
        <Ico s={16} v={16}>
          <circle cx="8" cy="8" r="7.300" fill="#cfe7f8" stroke="#6ab2e4" />
          <path d="M6 4l6 4-6 4z" fill="#3f8fcc" stroke="none" />
        </Ico>
        <span className="mt-px ml-[7px] flex-1 tracking-[-0.500px]">Run</span>
        <Caret cls="scale-90" />
      </div>
    </div>
  );
}

const SIDE: [string, string][] = [
  ["Catalog", "h-[41px]"],
  ["Suitability Modeler", "h-[99px]"],
  ["Export", "h-[34px]"],
  ["Chart Properties", "h-[85px]"],
  ["Geoprocessing", "h-[79px]"],
  ["History", "h-[37px]"],
  ["Print Layout", "h-[64px]"],
  ["Symbolo", "h-[42px]"],
];

/* ---------- taskbar ---------- */

function Task({ w, on, label, children }: Kids & { w: string; on?: boolean; label: string }) {
  return (
    <div className={`flex h-full shrink-0 items-center gap-[5px] border-b-[3px] border-[#b5ada8] whitespace-nowrap ${w} ${on ? "bg-[#6b6966] pl-[11px]" : "pl-[7px]"}`}>
      {children}
      <span>{label}</span>
    </div>
  );
}

function Taskbar() {
  return (
    <div className="flex h-8 items-center overflow-hidden bg-[#3c3b38] text-[12px] tracking-[-0.300px] text-white">
      <Ico s={17} v={17} cls="ml-[15px]">
        <path d="M0 2.500L7.500 1.500V8H0zM8.500 1.300L17 0v8H8.500zM0 9h7.500v6.500L0 14.500zM8.500 9H17v8l-8.500-1.300z" fill="#fff" stroke="none" />
      </Ico>
      <Ico s={16} v={16} cls="ml-8">
        <circle cx="10" cy="5.500" r="4.800" stroke="#fff" strokeWidth="1.300" />
        <path d="M6.500 9L1 15.500" stroke="#fff" strokeWidth="1.300" />
      </Ico>
      <Ico s={18} v={18} cls="ml-[31px]">
        <path d="M1.500 1v3.500h10V1M1.500 7.500h10v5h-10zM1.500 17v-2.500h10V17M15.500 1v3M15.500 12v5" stroke="#fff" strokeWidth="1.200" />
        <path d="M14 6h3v4h-3z" fill="#fff" stroke="none" />
      </Ico>
      <div className="ml-[22px] h-3.5 w-[3px] border-x border-[#6b6966]" />
      <div className="ml-[13px] h-full">
        <Task w="w-[156px]" on label="PatternDetection_...">
          <Ico s={22} v={22}>
            <path d="M11 0l10 5.500v11L11 22 1 16.500v-11z" fill="#1b87e0" stroke="none" />
            <circle cx="11" cy="11" r="6.500" fill="#fff" stroke="none" />
            <path d="M8 6l4 1 1 3-3 2-3-2zM12 13l4-2-2 5-3 1z" fill="#1464b4" stroke="none" />
          </Ico>
        </Task>
      </div>
      <div className="ml-[14px] flex h-[23px] w-[23px] items-center justify-center rounded-full bg-[#75a8d9] font-['Liberation_Serif',serif] text-[16px]">R</div>
      <div className="ml-[17px] h-full">
        <Task w="w-[148px]" label="PatternDetection_...">
          <Ico s={22} v={22}>
            <path d="M3 2h7v18H3z" fill="#e9c45c" stroke="none" />
            <path d="M7 2h8v14l-3 4H7z" fill="#f9e09a" stroke="none" />
          </Ico>
        </Task>
      </div>
      <div className="ml-[9px] h-full">
        <Task w="w-[148px]" label="ArcPython/Spatial...">
          <Ico s={22} v={22}>
            <circle cx="11" cy="11" r="11" fill="#f5c52c" stroke="none" />
            <path d="M11 11L1.500 5.500A11 11 0 0 0 10 22z" fill="#1da462" stroke="none" />
            <path d="M1.500 5.500A11 11 0 0 1 20.500 5.500L21 7H11v4z" fill="#dd4b3e" stroke="none" />
            <circle cx="11" cy="11" r="5" fill="#4a8af4" stroke="#fff" strokeWidth="1.200" />
          </Ico>
        </Task>
      </div>
      <Ico s={22} v={22} cls="ml-[17px]">
        <path d="M.5 3.500h21v15H.500z" fill="#222" stroke="#999" />
        <path d="M1 4h20v2H1z" fill="#ccc" stroke="none" />
        <path d="M3 8.500l3 1-3 1M7.500 11h3" stroke="#ccc" strokeWidth=".8" />
      </Ico>
      <Ico s={24} v={24} cls="ml-[25px]">
        <circle cx="12" cy="12" r="11.500" fill="#55b583" stroke="none" />
        <g stroke="#e8fff0" strokeWidth="1">
          <ellipse cx="12" cy="12" rx="3" ry="8" transform="rotate(25 12 12)" />
          <ellipse cx="12" cy="12" rx="3" ry="8" transform="rotate(85 12 12)" />
          <ellipse cx="12" cy="12" rx="3" ry="8" transform="rotate(145 12 12)" />
        </g>
      </Ico>
      <Ico s={24} v={24} cls="ml-[23px]">
        <path d="M0 0h24v24H0z" fill="#424242" stroke="none" />
        <path d="M18 3v5l-6 2.500 6 2.500v4L7 21v-4.500l6-2.500-6-2.500V7z" fill="#f79a1e" stroke="none" />
      </Ico>
      <div className="ml-[16px] h-full">
        <Task w="w-[148px]" label="SNAP7.png - Paint">
          <Ico s={23} v={23}>
            <path d="M1 9c0-7 20-9 20 2 0 9-8 12-16 11 0-4 3-5 1-8-2-2-5-2-5-5z" fill="#d4e7f3" stroke="#8fb8d0" />
            <circle cx="6" cy="8" r="2" fill="#e25a3a" stroke="none" />
            <circle cx="11" cy="6" r="2" fill="#f2c230" stroke="none" />
            <circle cx="16" cy="8" r="2" fill="#55a84a" stroke="none" />
            <path d="M20 1L10 17" stroke="#d68a35" strokeWidth="3" />
          </Ico>
        </Task>
      </div>
      <div className="ml-[16px] flex h-[23px] w-[24px] items-center justify-center bg-[#1172b8]">
        <Ico s={16} v={16}>
          <path d="M8 8L1 3v5l3 1-2 4 5-2zM8 8l7-5v5l-3 1 2 4-5-2z" fill="#3f9a3a" stroke="#143a1c" />
        </Ico>
      </div>
      <Ico s={24} v={24} cls="ml-[25px]">
        <path d="M1 7l9-3c5-2 11 1 10 8l-4 9H6l5-7-2-5z" fill="#dce9f4" stroke="#4f7394" />
        <path d="M12 3c6 0 9 5 8 10l-5 8-3-6 3-5z" fill="#29405c" stroke="none" />
        <circle cx="12" cy="8" r="1.500" fill="#111" stroke="none" />
      </Ico>
      <div className="ml-[26px] h-3.5 w-[3px] border-x border-[#6b6966]" />
      <span className="-mt-1 ml-[15px] w-[13px] text-[12px]">FR</span>
      <Ico s={12} v={12} cls="ml-[17px]">
        <path d="M1 9l5-6 5 6" stroke="#fff" strokeWidth="1.300" />
      </Ico>
      <Ico s={16} v={16} cls="ml-[9px]">
        <path d="M1 6h2l4-4v12l-4-4H1zM9 6c1 1 1 3 0 4M11 4c2 2 2 6 0 8M13 2c3 3 3 9 0 12" stroke="#fff" />
      </Ico>
      <Ico s={16} v={16} cls="ml-[9px]">
        <path d="M5.500 5.500h10v7h-9M1 3h6M2 1v2M6 1v2M1.500 3v4h5V3M4 7v7" stroke="#fff" strokeWidth="1.200" />
        <path d="M8 7h6v4H8z" fill="#fff" stroke="none" />
      </Ico>
      <Ico s={18} v={18} cls="ml-[12px]">
        <path d="M5 10l7-8 3 2-7 9zM5 10l-3 5M2 15c3 2 5-1 7-2M9 9c4-2 7-1 5 2-2 2-4 1-3 0" stroke="#fff" strokeWidth="1.200" />
      </Ico>
      <div className="-mt-[9px] ml-[11px] flex w-[60px] flex-col text-center leading-[17px] tracking-[-0.500px]">
        <span>18:37</span>
        <span>22/11/2020</span>
      </div>
      <Ico s={18} v={18} cls="ml-[17px]">
        <path d="M1.500 1.500h15v12H12l-3 3v-3H1.500z" stroke="#fff" strokeWidth="1.300" />
      </Ico>
      <div className="ml-[18px] h-full w-px bg-[#777]" />
    </div>
  );
}

/* ---------- window ---------- */

function TitleBar() {
  return (
    <div className="flex h-[34px] items-center text-[12px]">
      <div className="mt-px flex w-[180px] items-center pl-3 text-[#555]">
        <FolderMap kind={0} />
        <div className="ml-3"><FolderMap kind={1} /></div>
        <div className="ml-3"><FolderMap kind={2} /></div>
        <Ico s={14} v={14} cls="ml-[10px]">
          <path d="M5 1L1.500 4.500 5 8M2 4.500h6c6 0 6 8 0 8H6" stroke="#a9cde6" strokeWidth="2" />
        </Ico>
        <Caret cls="ml-[5px] scale-75" />
        <Ico s={14} v={14} cls="ml-[7px]">
          <path d="M9 1l3.500 3.500L9 8M12 4.500H6c-6 0-6 8 0 8h2" stroke="#a9cde6" strokeWidth="2" />
        </Ico>
        <Caret cls="ml-[6px] scale-75" />
        <Ico s={6} v={6} cls="ml-[14px]">
          <path d="M0 .8h6" stroke="#444" />
          <path d="M0 2.500h6L3 6z" fill="#444" stroke="none" />
        </Ico>
      </div>
      <div className="flex-1 pr-[6px] pb-px text-center tracking-[-0.320px] text-[#8a8a8a]">PatternDetection_SpaceTime - Space-Time Pattern Mining 2D - ArcGIS Pro</div>
      <div className="-mt-[3px] flex w-[174px] items-center text-[#333]">
        <span className="ml-[9px] text-[14px] font-semibold">?</span>
        <Ico s={10} v={10} cls="ml-[39px]">
          <path d="M0 5.500h10" stroke="#333" />
        </Ico>
        <Ico s={10} v={10} cls="ml-[36px]">
          <path d="M.5 2.500h7v7h-7zM2.500 2.500v-2h7v7h-2" stroke="#333" />
        </Ico>
        <Ico s={10} v={10} cls="ml-[36px]">
          <path d="M0 0l10 10M10 0L0 10" stroke="#333" strokeWidth="1.200" />
        </Ico>
      </div>
    </div>
  );
}

function Tabs() {
  return (
    <div className="flex h-[26px] text-[13px] leading-[29px] text-[#636363]">
      <div className="h-[25px] w-[78px] bg-[#0078d0] text-center text-white">Project</div>
      <div className="w-[5px] border-b border-[#bdbdbd]" />
      <div className="w-[54px] border border-b-0 border-[#bdbdbd] bg-[#f8f8f8] text-center leading-[27px] text-[#0a73c4]">Map</div>
      <div className="flex flex-1 border-b border-[#bdbdbd]">
        <span className="w-[68px] text-center">Insert</span>
        <span className="w-[72px] text-center">Analysis</span>
        <span className="w-[63px] text-center">View</span>
        <span className="w-[48px] text-center">Edit</span>
        <span className="w-[82px] text-center">Imagery</span>
        <span className="w-[60px] text-center">Share</span>
        <div className="ml-auto flex items-center text-[12px] leading-[24px] text-[#4a4a4a]">
          <Ico s={15} v={16} cls="mr-[2px]">
            <circle cx="6" cy="3.500" r="2.800" fill="#a8d4a8" stroke="#5a9a5f" />
            <path d="M1.500 7.500h9v5h-2v3h-5v-3h-2z" fill="#a8d4a8" stroke="#5a9a5f" />
          </Ico>
          <span className="-mt-px tracking-[-0.240px]">Linda (Spatial Data Science)</span>
          <Caret cls="ml-px scale-75" />
          <Ico s={15} v={16} cls="ml-[9px]">
            <path d="M1.500 13h13c-3-2-2-6-3-8.500C10.500 2 5.500 2 4.500 4.500 3.500 7 4.500 11 1.500 13zM8 0v2M6 15h4" strokeWidth="1.300" />
          </Ico>
          <Ico s={9} v={9} cls="mr-[8px] ml-[14px]">
            <path d="M1 6.500L4.500 3 8 6.500" strokeWidth="2.200" />
          </Ico>
        </div>
      </div>
    </div>
  );
}

function Ribbon() {
  return (
    <div className="flex h-[91px] border-b border-[#bdbdbd] bg-[#f8f8f8] text-[12px] tracking-[-0.360px] text-[#444]">
      <Group w="w-[128px]" label="Clipboard">
        <Big w="w-[44px]" icon={Paste} a="Paste" caret cls="text-[#a0a0a0]" />
        <div className="ml-px flex flex-col pt-[4px] text-[#a0a0a0]">
          <Row icon={Cut}>Cut</Row>
          <Row icon={CopyI}>Copy</Row>
          <Row icon={CopyPath}>Copy Path</Row>
        </div>
      </Group>
      <Group w="w-[203px]" label="Navigate" launcher>
        <div className="mt-[2px] ml-1 h-[68px] bg-[#bcd4e8]">
          <Big w="w-[46px]" icon={Explore} a="Explore" caret cls="-mt-[2px]" />
        </div>
        <div className="grid h-[70px] w-11 grid-cols-2 place-items-center pt-[3px]">
          {Globe}
          {ZoomSel}
          <Arrows />
          <Arrows out />
          <Arrow />
          <Arrow right />
        </div>
        <Big w="w-[63px]" icon={Book} a="Bookmarks" caret cls="ml-[2px]" />
        <Big w="w-[40px]" icon={GoTo} a="Go" b="To XY" />
      </Group>
      <Group w="w-[230px]" label="Layer">
        <Big w="w-[54px]" icon={Basemap} a="Basemap" caret cls="ml-1" />
        <Big w="w-[38px]" icon={AddData} a="Add" b="Data" inline />
        <div className="ml-[3px] flex flex-col pt-[3px]">
          <Row icon={Preset}>
            Add Preset <Caret cls="scale-75" />
          </Row>
          <Row icon={Graphics}>Add Graphics Layer</Row>
        </div>
      </Group>
      <Group w="w-[238px]" label="Selection" launcher>
        <Big w="w-[40px]" icon={SelectI} a="Select" caret cls="ml-[3px]" />
        <Big w="w-[56px]" icon={SelAttr} a="Select By" b="Attributes" />
        <Big w="w-[56px]" icon={SelLoc} a="Select By" b="Location" />
        <div className="ml-[2px] flex flex-col pt-[3px]">
          <Row icon={Attributes}>Attributes</Row>
          <Row icon={ClearI} cls="text-[#a0a0a0]">Clear</Row>
        </div>
      </Group>
      <Group w="w-[241px]" label="Inquiry">
        <Big w="w-[49px]" icon={Measure} a="Measure" caret cls="ml-[6px]" />
        <Big w="w-[45px]" icon={Locate} a="Locate" caret />
        <Big w="w-[68px]" icon={Info} a="Infographics" caret />
        <Big w="w-[64px]" icon={Coord} a="Coordinate" b="Conversion" cls="ml-[3px]" />
      </Group>
      <Group w="w-[167px]" label="Labeling" launcher>
        <div className="ml-[7px] flex w-[107px] flex-col pt-[3px]">
          <Row icon={<Tag k="pause" />}>
            <span className="w-[34px]">Pause</span>
            <Tag k="lock" />
            Lock
          </Row>
          <Row icon={<Tag k="x" />}>View Unplaced</Row>
          <Row icon={<Tag />}>
            More <Caret cls="scale-90" />
          </Row>
        </div>
        <Big w="w-[48px]" icon={Convert} a="Convert" caret />
      </Group>
      <Group w="w-[139px]" label="Offline" launcher>
        <Big w="w-[58px]" icon={Download} a="Download" b="Map" inline cls="ml-[5px]" />
        <div className="ml-1 flex flex-col pt-[3px] text-[#a0a0a0]">
          <Row icon={<Sync />}>Sync</Row>
          <Row icon={<Sync x />}>Remove</Row>
        </div>
      </Group>
    </div>
  );
}

export default function App() {
  return (
    <div className="flex h-[768px] w-[1366px] flex-col overflow-hidden bg-[#f1f1f1] font-['Noto_Sans',sans-serif] tracking-[-0.270px]">
      <TitleBar />
      <Tabs />
      <Ribbon />
      <div className="flex h-[577px] pt-[6px] pl-[6px]">
        <Contents />
        <MapPane />
        <Geoprocessing />
        <div className="ml-auto flex h-[565px] w-[25px] flex-col gap-3 overflow-hidden text-[11.500px] tracking-[-0.380px] text-[#555]">
          {SIDE.map(([t, h]) => (
            <div key={t} className={`flex shrink-0 justify-between ${h}`}>
              <span className="leading-[18px] whitespace-nowrap [writing-mode:vertical-rl]">{t}</span>
              <div className="w-[6px] bg-[#cdcdcd]" />
            </div>
          ))}
        </div>
      </div>
      <div className="h-2 bg-black" />
      <Taskbar />
    </div>
  );
}
